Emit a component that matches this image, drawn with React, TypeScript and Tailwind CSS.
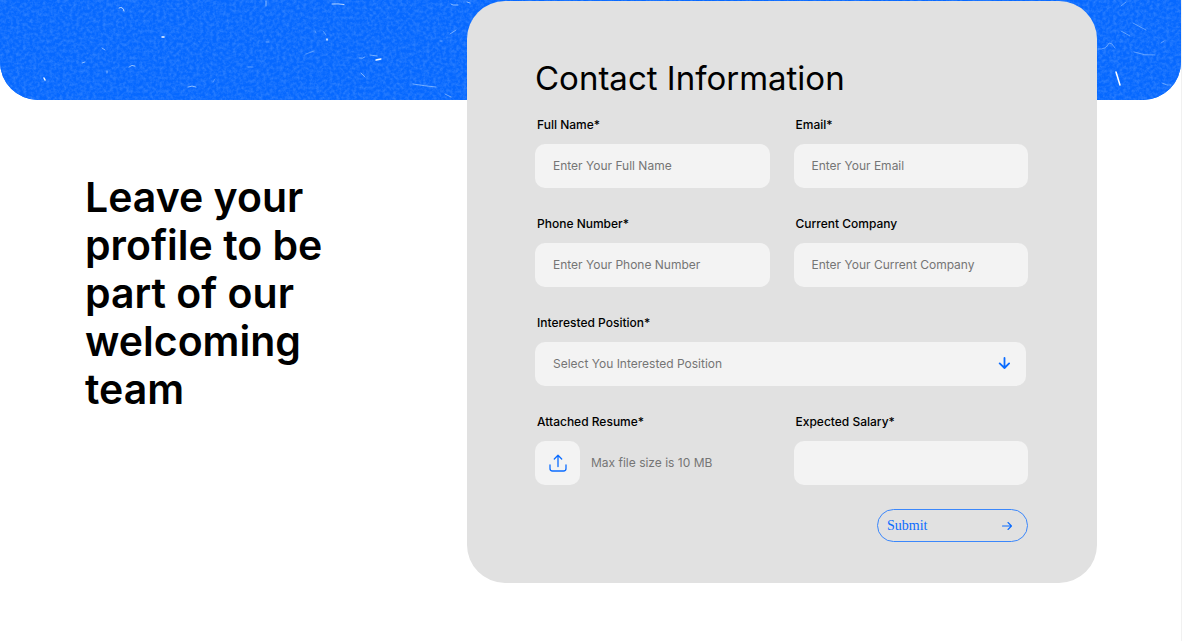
import type { InputHTMLAttributes, ReactNode } from 'react'

const fieldClass =
  'block h-11 w-full rounded-[10px] bg-[#f3f3f3] px-[18px] pb-[2px] text-[12px] text-black placeholder:text-[#757575] placeholder:opacity-100 outline-none focus:ring-1 focus:ring-[#0b6cff]'

function Group({ id, label, children }: { id: string; label: string; children: ReactNode }) {
  return (
    <div>
      <label htmlFor={id} className="mb-[10px] block pl-[2px] text-[12px] leading-[18px] font-medium text-black">
        {label}
      </label>
      {children}
    </div>
  )
}

function TextField({ id, label, ...rest }: { id: string; label: string } & InputHTMLAttributes<HTMLInputElement>) {
  return (
    <Group id={id} label={label}>
      <input id={id} name={id} className={fieldClass} {...rest} />
    </Group>
  )
}

function PaperTexture() {
  return (
    <svg className="block h-full w-full" viewBox="0 0 1181 100" preserveAspectRatio="xMidYMid slice" aria-hidden="true">
      <defs>
        <filter id="grain" x="0" y="0" width="100%" height="100%" colorInterpolationFilters="sRGB">
          <feTurbulence type="fractalNoise" baseFrequency="0.3" numOctaves="3" seed="8" />
          <feColorMatrix values="0 0 0 0 0.3  0 0 0 0 0.58  0 0 0 0 1  1.1 0 0 0 -0.4" />
        </filter>
      </defs>
      <rect width="1181" height="100" fill="#0668ff" />
      <rect width="1181" height="100" filter="url(#grain)" />
      <g fill="none" stroke="#9cc6ff" strokeLinecap="round" strokeWidth="0.9">
        <path d="M119 8q4-2 5 3" stroke="#d5e8ff" />
        <path d="M266 1v5" />
        <path d="M332 4q6-.5 12 .5" stroke="#c8e0ff" />
        <path d="M451 4l2 1h5M467 2l3 1" />
        <path d="M129 67q3-3 6-1M188 87q4-2 8 0M102 48l3 2M82 63l3-1M107 71v2" />
        <path d="M213 82l2-3M266 42h3M315 31l1 2M323 31l3 4M306 54l8-3M248 67h5" opacity=".55" />
        <path d="M359 58q4 1 6-1M370 55l7 1M361 73l4 4M413 84q12 2 23 3M445 94l6 3M450 34l6-4M440 41h2" opacity=".8" />
        <path d="M376 60l5-1" stroke="#f3f9ff" strokeWidth="1.3" />
        <path d="M44 78l1 2M162 37h2M327 39v1" stroke="#f3f9ff" strokeWidth="1.5" />
        <path d="M1098 49q8 1 11-6l3 1 3 4M1121 31l9 5M1134 52q11 4 21 3M1121 6l5-4M1133 23l13 7M1161 43l3-2M1162 83l5 2h4" opacity=".65" />
        <path d="M1116 72l4 13" stroke="#fff" strokeWidth="1.5" />
      </g>
    </svg>
  )
}

export default function App() {
  return (
    <div className="min-h-screen border-r border-[#f1f1f1] bg-white font-['Inter','Liberation_Sans',sans-serif] text-black">
      <div className="h-[100px] overflow-hidden rounded-b-[38px] bg-[#0b6cff]">
        <PaperTexture />
      </div>

      <main className="relative -mt-[99px] grid grid-cols-[382fr_630fr] items-start pr-[84px] pb-[58px] pl-[85px]">
        <h1 className="max-w-[280px] pt-[172px] text-[41px] leading-[48px] font-semibold">
          Leave your profile to be part of our welcoming team
        </h1>

        <form className="rounded-[38px] bg-[#e1e1e1] pt-[57px] pr-[69px] pb-[41px] pl-[68px]" onSubmit={(e) => e.preventDefault()}>
          <h2 className="mb-[18px] text-[33px] leading-10 font-normal">Contact Information</h2>

          <div className="grid grid-cols-2 gap-x-6 gap-y-[27px]">
            <TextField id="fullName" label="Full Name*" placeholder="Enter Your Full Name" />
            <TextField id="email" label="Email*" type="email" placeholder="Enter Your Email" />
            <TextField id="phone" label="Phone Number*" type="tel" placeholder="Enter Your Phone Number" />
            <TextField id="company" label="Current Company" placeholder="Enter Your Current Company" />

            <div className="col-span-2 pr-[2px]">
              <Group id="position" label="Interested Position*">
                <div className="relative">
                  <select
                    id="position"
                    name="position"
                    defaultValue=""
                    className="block h-11 w-full appearance-none rounded-[10px] bg-[#f3f3f3] px-[18px] text-[12px] text-[#757575] outline-none focus:ring-1 focus:ring-[#0b6cff]"
                  >
                    <option value="">Select You Interested Position</option>
                  </select>
                  <svg
                    className="pointer-events-none absolute top-[15px] right-4 h-3 w-3"
                    viewBox="0 0 12 12"
                    fill="none"
                    stroke="#0b6cff"
                    strokeWidth="1.8"
                    strokeLinecap="round"
                    strokeLinejoin="round"
                    aria-hidden="true"
                  >
                    <path d="M6.500 1v10M1.700 6.400 6.500 11l4.600-4.600" />
                  </svg>
                </div>
              </Group>
            </div>

            <Group id="resume" label="Attached Resume*">
              <div className="flex items-center gap-[11px]">
                <label htmlFor="resume" className="flex h-11 w-[45px] cursor-pointer items-center justify-center rounded-[10px] bg-[#f3f3f3]">
                  <input id="resume" name="resume" type="file" className="sr-only" />
                  <svg
                    className="h-[18px] w-[18px]"
                    viewBox="0 0 18 18"
                    fill="none"
                    stroke="#0b6cff"
                    strokeWidth="1.3"
                    strokeLinecap="round"
                    strokeLinejoin="round"
                    aria-hidden="true"
                  >
                    <path d="M9 12.500V1.500M5.300 5 9 1.300 12.700 5M1 11v3.500q0 2.500 2.500 2.500h11q2.500 0 2.500-2.500V11" />
                  </svg>
                </label>
                <span className="text-[12px] text-[#757575]">Max file size is 10 MB</span>
              </div>
            </Group>
            <TextField id="salary" label="Expected Salary*" />
          </div>

          <button
            type="submit"
            className="mt-6 ml-auto flex h-[33px] w-[151px] items-center justify-between rounded-full border border-[#3b87fb] pr-[14px] pl-[9px] font-['Liberation_Serif',serif] text-[14px] text-[#0b6cff]"
          >
            Submit
            <svg
              className="h-3 w-3"
              viewBox="0 0 12 12"
              fill="none"
              stroke="currentColor"
              strokeWidth="1.1"
              strokeLinecap="round"
              strokeLinejoin="round"
              aria-hidden="true"
            >
              <path d="M1.500 6h9M7 2.500 10.500 6 7 9.500" />
            </svg>
          </button>
        </form>
      </main>
    </div>
  )
}
